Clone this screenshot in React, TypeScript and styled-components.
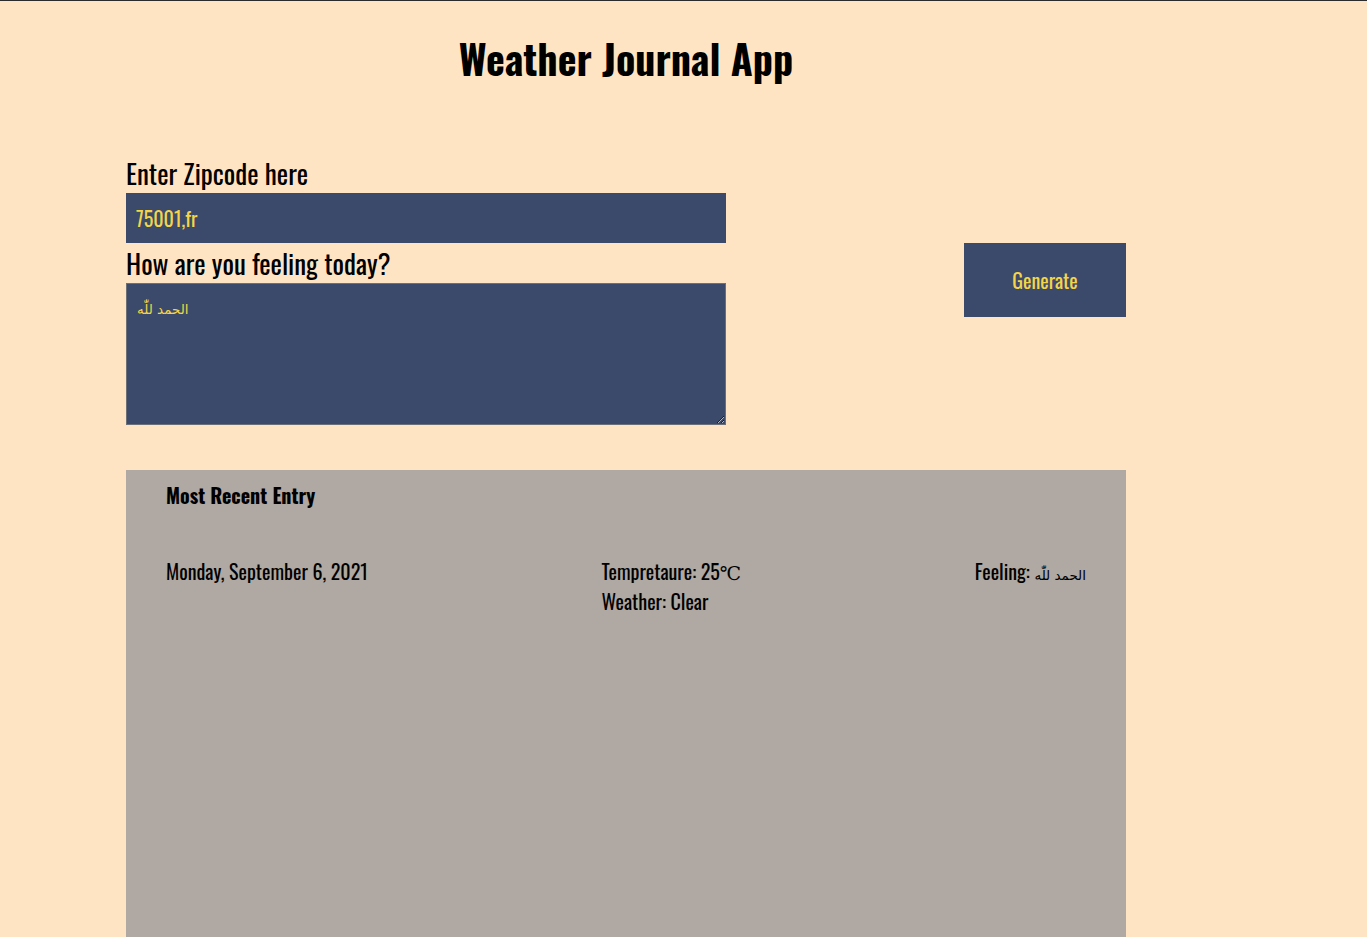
import React from "react";
import styled, { createGlobalStyle } from "styled-components";

const FONT = `"Oswald", "Liberation Sans Narrow", "DejaVu Sans Condensed", sans-serif`;

const Global = createGlobalStyle`
  html, body { margin: 0; padding: 0; }
  body {
    background: #ffe4c4;
    font-family: ${FONT};
    border-top: 1px solid #2b2b2b;
    min-height: 936px;
    overflow: hidden;
  }
`;

const App = styled.div`
  width: 1000px;
  margin-left: 126px;
  display: flex;
  flex-direction: column;
`;

const Title = styled.h1`
  margin: 32px 0 0;
  text-align: center;
  font-size: 40px;
  font-weight: 700;
  line-height: 50px;
  color: #000;
`;

const FormArea = styled.div`
  margin-top: 74px;
  display: flex;
  justify-content: space-between;
  align-items: flex-start;
`;

const Fields = styled.div`
  width: 600px;
  display: flex;
  flex-direction: column;
`;

const Label = styled.label`
  font-size: 27px;
  line-height: 33px;
  padding-bottom: 3px;
  color: #000;
`;

const ZipInput = styled.input`
  box-sizing: border-box;
  width: 600px;
  height: 50px;
  border: none;
  background: #3b4a6b;
  color: #f5d547;
  font-family: ${FONT};
  font-size: 20px;
  padding: 0 10px;
  margin-bottom: 4px;
  outline: none;
`;

const Feelings = styled.textarea`
  box-sizing: border-box;
  width: 600px;
  height: 142px;
  border: 1px solid #6b6f78;
  background: #3b4a6b;
  color: #f5d547;
  font-family: "DejaVu Sans", ${FONT};
  font-size: 13.5px;
  padding: 17px 10px;
  outline: none;
  resize: both;
`;

const Generate = styled.button`
  margin-top: 86px;
  width: 162px;
  height: 74px;
  border: none;
  background: #3b4a6b;
  color: #f5d547;
  font-family: ${FONT};
  font-size: 20px;
  cursor: pointer;
`;

const EntryHolder = styled.section`
  margin-top: 45px;
  background: #b0a8a2;
  min-height: 480px;
  padding: 12px 40px;
  box-sizing: border-box;
`;

const EntryTitle = styled.div`
  font-size: 20px;
  font-weight: 700;
  line-height: 26px;
  color: #000;
`;

const EntryRow = styled.div`
  margin-top: 48px;
  display: flex;
  justify-content: space-between;
  align-items: flex-start;
`;

const Cell = styled.div`
  font-size: 20px;
  line-height: 30px;
  color: #000;
`;

const Line = styled.div`
  height: 30px;
  line-height: 30px;
`;

const Deg = styled.span`
  font-family: "DejaVu Serif", "Liberation Serif", serif;
  font-size: 19px;
  line-height: 1;
`;

const Arabic = styled.span`
  font-family: "DejaVu Sans", sans-serif;
  font-size: 13.5px;
  line-height: 1;
`;

const FEELING = "الحمد للّٰه";

export default function WeatherJournal() {
  return (
    <>
      <Global />
      <App>
        <Title>Weather Journal App</Title>
        <FormArea>
          <Fields>
            <Label htmlFor="zip">Enter Zipcode here</Label>
            <ZipInput id="zip" defaultValue="75001,fr" />
            <Label htmlFor="feelings">How are you feeling today?</Label>
            <Feelings id="feelings" defaultValue={FEELING} />
          </Fields>
          <Generate>Generate</Generate>
        </FormArea>
        <EntryHolder>
          <EntryTitle>Most Recent Entry</EntryTitle>
          <EntryRow>
            <Cell>Monday, September 6, 2021</Cell>
            <Cell>
              <Line>
                Tempretaure: 25<Deg>℃</Deg>
              </Line>
              <Line>Weather: Clear</Line>
            </Cell>
            <Cell>
              Feeling: <Arabic>{FEELING}</Arabic>
            </Cell>
          </EntryRow>
        </EntryHolder>
      </App>
    </>
  );
}
